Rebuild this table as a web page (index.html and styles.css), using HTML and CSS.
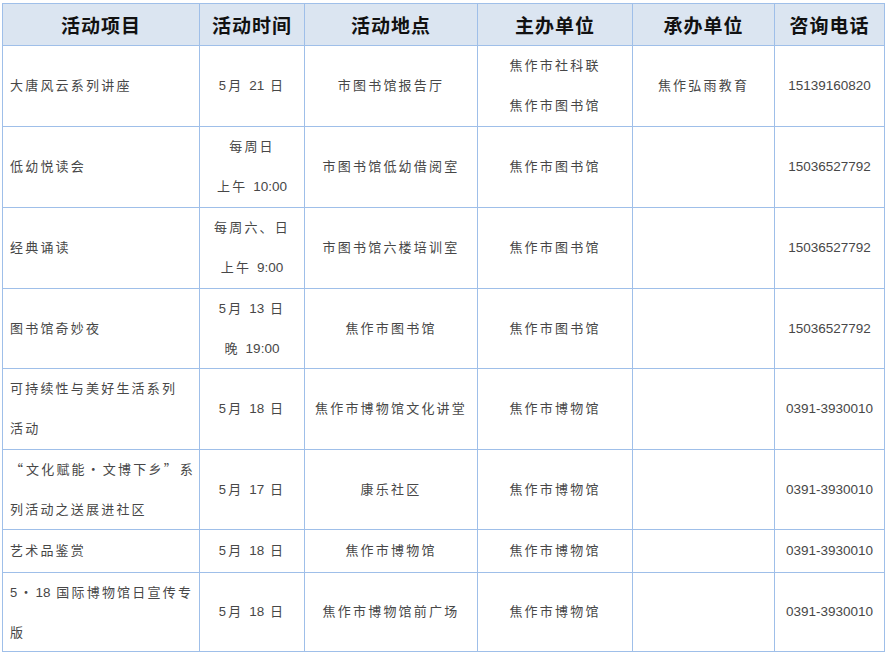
FILE: index.html
```html
<!DOCTYPE html>
<html lang="zh-CN">
<head>
<meta charset="utf-8">
<title>活动安排</title>
<link rel="stylesheet" href="styles.css">
</head>
<body>
<table class="schedule">
  <colgroup>
    <col class="c1"><col class="c2"><col class="c3"><col class="c4"><col class="c5"><col class="c6">
  </colgroup>
  <thead>
    <tr class="head">
      <th>活动项目</th><th>活动时间</th><th>活动地点</th><th>主办单位</th><th>承办单位</th><th>咨询电话</th>
    </tr>
  </thead>
  <tbody>
    <tr class="r81">
      <td class="name">大唐风云系列讲座</td>
      <td>5月 <span class="n">21</span> 日</td>
      <td>市图书馆报告厅</td>
      <td><span class="ln">焦作市社科联</span><span class="ln">焦作市图书馆</span></td>
      <td>焦作弘雨教育</td>
      <td class="tel">15139160820</td>
    </tr>
    <tr class="r81">
      <td class="name">低幼悦读会</td>
      <td><span class="ln">每周日</span><span class="ln">上午 <span class="n">10:00</span></span></td>
      <td>市图书馆低幼借阅室</td>
      <td>焦作市图书馆</td>
      <td></td>
      <td class="tel">15036527792</td>
    </tr>
    <tr class="r81">
      <td class="name">经典诵读</td>
      <td><span class="ln">每周六、日</span><span class="ln">上午 <span class="n">9:00</span></span></td>
      <td>市图书馆六楼培训室</td>
      <td>焦作市图书馆</td>
      <td></td>
      <td class="tel">15036527792</td>
    </tr>
    <tr class="r80">
      <td class="name">图书馆奇妙夜</td>
      <td><span class="ln">5月 <span class="n">13</span> 日</span><span class="ln">晚 <span class="n">19:00</span></span></td>
      <td>焦作市图书馆</td>
      <td>焦作市图书馆</td>
      <td></td>
      <td class="tel">15036527792</td>
    </tr>
    <tr class="r81">
      <td class="name"><span class="ln">可持续性与美好生活系列</span><span class="ln">活动</span></td>
      <td>5月 <span class="n">18</span> 日</td>
      <td>焦作市博物馆文化讲堂</td>
      <td>焦作市博物馆</td>
      <td></td>
      <td class="tel">0391-3930010</td>
    </tr>
    <tr class="r80">
      <td class="name"><span class="ln"><span class="cjk">“</span>文化赋能<span class="cjk">·</span>文博下乡<span class="cjk">”</span>系</span><span class="ln">列活动之送展进社区</span></td>
      <td>5月 <span class="n">17</span> 日</td>
      <td>康乐社区</td>
      <td>焦作市博物馆</td>
      <td></td>
      <td class="tel">0391-3930010</td>
    </tr>
    <tr class="r43">
      <td class="name">艺术品鉴赏</td>
      <td>5月 <span class="n">18</span> 日</td>
      <td>焦作市博物馆</td>
      <td>焦作市博物馆</td>
      <td></td>
      <td class="tel">0391-3930010</td>
    </tr>
    <tr class="r79">
      <td class="name"><span class="ln">5<span class="cjk">·</span><span class="n">18</span> 国际博物馆日宣传专</span><span class="ln">版</span></td>
      <td>5月 <span class="n">18</span> 日</td>
      <td>焦作市博物馆前广场</td>
      <td>焦作市博物馆</td>
      <td></td>
      <td class="tel">0391-3930010</td>
    </tr>
  </tbody>
</table>
</body>
</html>
```
FILE: styles.css
```css
html, body {
  margin: 0;
  padding: 0;
  background: #ffffff;
}

body {
  padding: 3px 0 0 2px;
  font-family: "Liberation Sans", "Noto Sans CJK SC", sans-serif;
}

.schedule {
  border-collapse: collapse;
  table-layout: fixed;
  width: 882px;
}

.c1 { width: 197px; }
.c2 { width: 105px; }
.c3 { width: 173px; }
.c4 { width: 155px; }
.c5 { width: 142px; }
.c6 { width: 110px; }

.schedule th,
.schedule td {
  border: 1px solid #9fbfe9;
  padding: 0;
  vertical-align: middle;
  text-align: center;
}

.schedule th {
  background: #dbe5f1;
  color: #111111;
  font-family: "Noto Sans CJK SC", sans-serif;
  font-size: 19px;
  font-weight: 700;
  letter-spacing: 1px;
  line-height: 24px;
}

.head { height: 42px; }
.r81 { height: 81px; }
.r80 { height: 80px; }
.r79 { height: 79px; }
.r43 { height: 43px; }

.schedule td {
  color: #474747;
  font-size: 13px;
  line-height: 20px;
  letter-spacing: 2.2px;
  font-weight: 400;
}

.schedule td .ln {
  display: block;
}

.schedule td .ln + .ln {
  margin-top: 20px;
}

.schedule td .n {
  letter-spacing: 0;
  font-size: 13.5px;
}

.schedule td .cjk {
  font-family: "Noto Sans CJK SC", sans-serif;
  letter-spacing: 3px;
}

.schedule td.name {
  text-align: left;
  padding-left: 7px;
  white-space: nowrap;
}

.schedule td.tel {
  letter-spacing: 0;
  font-size: 13.5px;
  color: #474747;
}
```
